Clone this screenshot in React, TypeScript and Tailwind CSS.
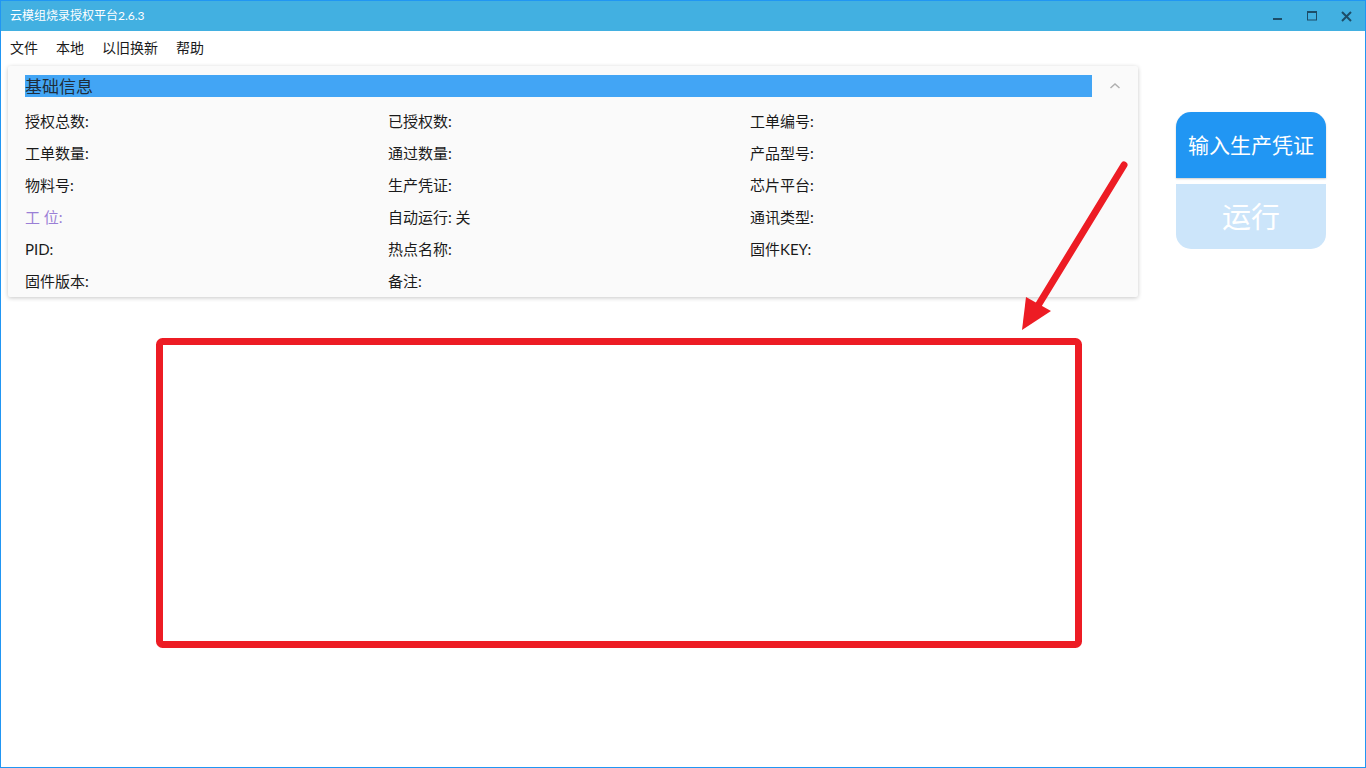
import React from 'react';

const fields: { label: string; tone?: 'purple' }[][] = [
  [{ label: '授权总数:' }, { label: '已授权数:' }, { label: '工单编号:' }],
  [{ label: '工单数量:' }, { label: '通过数量:' }, { label: '产品型号:' }],
  [{ label: '物料号:' }, { label: '生产凭证:' }, { label: '芯片平台:' }],
  [{ label: '工 位:', tone: 'purple' }, { label: '自动运行: 关' }, { label: '通讯类型:' }],
  [{ label: 'PID:' }, { label: '热点名称:' }, { label: '固件KEY:' }],
  [{ label: '固件版本:' }, { label: '备注:' }, { label: '' }],
];

const menus = ['文件', '本地', '以旧换新', '帮助'];

const App: React.FC = () => {
  return (
    <div
      className="relative w-[1366px] h-[768px] overflow-hidden bg-white border border-[#2196f3] text-[#1a1a1a]"
      style={{ fontFamily: '"Lato", "Noto Sans CJK SC", sans-serif' }}
    >
      {/* title bar */}
      <div className="h-[30px] bg-[#42b0e1] flex items-center justify-between pl-[9px]">
        <span className="text-[12px] text-white">云模组烧录授权平台2.6.3</span>
        <div className="flex items-center h-full">
          <button className="w-[34px] h-full flex items-center justify-center">
            <svg width="10" height="10" viewBox="0 0 10 10">
              <rect x="0" y="7" width="9" height="2" fill="#1d4d68" />
            </svg>
          </button>
          <button className="w-[34px] h-full flex items-center justify-center">
            <svg width="10" height="10" viewBox="0 0 10 10">
              <rect x="0.5" y="0.5" width="9" height="8.5" fill="none" stroke="#1d4d68" strokeWidth="1" />
              <rect x="0" y="0" width="10" height="2" fill="#1d4d68" />
            </svg>
          </button>
          <button className="w-[34px] h-full flex items-center justify-center mr-[2px]">
            <svg width="11" height="11" viewBox="0 0 11 11">
              <path d="M1 1 L10 10 M10 1 L1 10" stroke="#1d4d68" strokeWidth="2" />
            </svg>
          </button>
        </div>
      </div>

      {/* menu bar */}
      <div className="h-[32px] flex items-center gap-[18px] pl-[9px] text-[14px]">
        {menus.map(m => (
          <span key={m}>{m}</span>
        ))}
      </div>

      <div className="flex pt-[3px]">
        {/* info card */}
        <div className="ml-[7px] w-[1130px] h-[231px] bg-[#fafafa] rounded-[2px] shadow-[0_1px_4px_rgba(0,0,0,0.22)] pt-[9px] pl-[17px]">
          <div className="flex items-center">
            <div className="flex-1 h-[22px] bg-[#42a5f5] flex items-center">
              <span className="text-[17px] leading-none text-[#1f2d3a]">基础信息</span>
            </div>
            <div className="w-[46px] flex items-center justify-center">
              <svg width="12" height="8" viewBox="0 0 12 8">
                <polyline points="1.5,6 6,2 10.5,6" fill="none" stroke="#b0b0b0" strokeWidth="1.5" />
              </svg>
            </div>
          </div>
          <div className="mt-[8px]">
            {fields.map((row, i) => (
              <div key={i} className="grid grid-cols-[363px_362px_1fr] h-[32px] items-center text-[15px] leading-none">
                {row.map((f, j) => (
                  <span key={j} className={f.tone === 'purple' ? 'text-[#9a7fd6]' : ''}>
                    {f.label}
                  </span>
                ))}
              </div>
            ))}
          </div>
        </div>

        {/* action buttons */}
        <div className="ml-[38px] mt-[46px] flex flex-col gap-[6px] w-[150px]">
          <button className="h-[66px] bg-[#2196f3] rounded-t-[15px] text-white text-[21px] shadow-[0_1px_2px_rgba(0,0,0,0.2)]">
            输入生产凭证
          </button>
          <button className="h-[65px] bg-[#cce5fa] rounded-b-[15px] text-white text-[29px]">
            运行
          </button>
        </div>
      </div>

      {/* annotation overlay */}
      <svg
        className="absolute left-0 top-0 pointer-events-none"
        width="1366"
        height="768"
        viewBox="0 0 1366 768"
      >
        <rect x="158.5" y="340.5" width="919" height="303" rx="3" fill="none" stroke="#ed1c24" strokeWidth="7" />
        <line x1="1123" y1="164" x2="1038" y2="303" stroke="#ed1c24" strokeWidth="7" strokeLinecap="round" />
        <polygon points="1021,329 1025,296 1050,310" fill="#ed1c24" />
      </svg>
    </div>
  );
};

export default App;
